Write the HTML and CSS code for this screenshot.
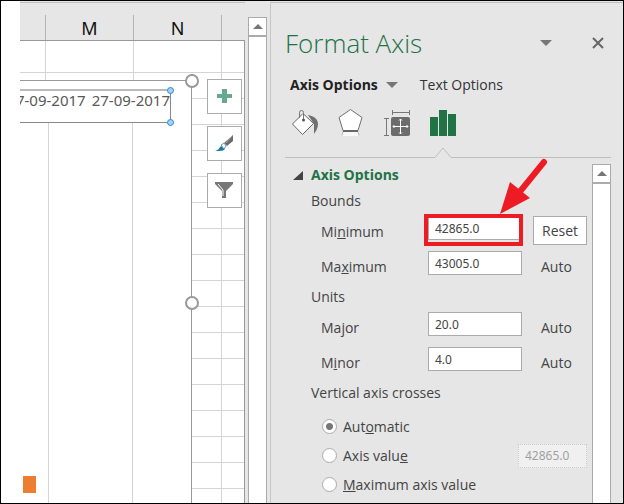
FILE: index.html
```html
<!DOCTYPE html>
<html lang="en">
  <head>
    <meta charset="UTF-8" />
    <meta name="viewport" content="width=device-width, initial-scale=1.0" />
    <title>Format Axis</title>
    <link rel="stylesheet" href="styles.css">
  </head>
  <body>
    <div class="app">
      <main class="sheet">
        <div class="grid">
          <div class="col-heads">
            <div class="col-head first"></div>
            <div class="col-head">M</div>
            <div class="col-head">N</div>
            <div class="col-head last"></div>
          </div>
          <div class="cells">
            <!-- chart floating over the cells -->
            <div class="chart">
              <div class="axis-labels">
                <span>17-09-2017</span>
                <span>27-09-2017</span>
                <i class="dot dot-top"></i>
                <i class="dot dot-bottom"></i>
              </div>
              <div class="plot">
                <div class="bar"></div>
              </div>
              <i class="handle handle-corner"></i>
              <i class="handle handle-side"></i>
            </div>
            <div class="chart-tools">
              <button class="tool" aria-label="Chart Elements">
                <svg width="33" height="33" viewBox="0 0 33 33">
                  <path d="M14 9h5v5h5v4h-5v5h-5v-5H9v-4h5z" fill="#68a88c" />
                </svg>
              </button>
              <button class="tool" aria-label="Chart Styles">
                <svg width="33" height="33" viewBox="0 0 33 33">
                  <path d="M25 8v6l-6 5-3-3z" fill="#6b6b6b" />
                  <path d="M24 9l-6 7" stroke="#aaa" fill="none" />
                  <path d="M7 24c3-1 4-2 5-4 2-2 5-1 5 1 0 3-4 3-10 3z" fill="#1f7a8c" />
                  <path d="M13 18l3-2 2 3-2 3z" fill="#fff" stroke="#5b9bd5" />
                </svg>
              </button>
              <button class="tool" aria-label="Chart Filters">
                <svg width="33" height="33" viewBox="0 0 33 33">
                  <path d="M7 8h18v2l-7 7v7h-4v-7l-7-7z" fill="#777" />
                  <path d="M10 10l5 6v6" stroke="#fff" fill="none" />
                </svg>
              </button>
            </div>
          </div>
        </div>
        <div class="scrollbar sheet-scroll">
          <button class="scroll-up" aria-label="Scroll up"></button>
          <div class="track"></div>
        </div>
      </main>

      <aside class="panel">
        <header class="panel-head">
          <h1>Format Axis</h1>
          <button class="icon-btn" aria-label="Pane options"><span class="caret"></span></button>
          <button class="icon-btn close" aria-label="Close">
            <svg width="14" height="14" viewBox="0 0 14 14">
              <path d="M2 2l10 10M12 2L2 12" stroke="#666" stroke-width="2" />
            </svg>
          </button>
        </header>

        <div class="tabs">
          <button class="tab selected">Axis Options <span class="caret"></span></button>
          <button class="tab">Text Options</button>
        </div>

        <nav class="categories">
          <button class="category" aria-label="Fill &amp; Line">
            <svg width="30" height="30" viewBox="0 0 30 30">
              <path d="M18 7c6 1 10 4 10 9 0 4-2 7-4 10V16z" fill="#707070" />
              <path d="M13 5.500l10.500 10L12.500 26.500l-10-10.500z" fill="#fff" stroke="#666" />
              <path d="M9.500 10V4.500q0-2 2-2t2 2V11" fill="none" stroke="#777" />
              <circle cx="13.500" cy="12" r="1.500" fill="#555" />
            </svg>
          </button>
          <button class="category" aria-label="Effects">
            <svg width="30" height="30" viewBox="0 0 30 30">
              <path d="M8 23h13l2 5H6z" fill="#f7f7f7" />
              <path d="M7 23.500l-1 4M22 23.500l1 4" stroke="#bbb" />
              <path d="M14.500 1.500L26 9.500l-4 13H7L3 9.500z" fill="#fff" stroke="#707070" />
              <path d="M7 23h15" stroke="#666" stroke-width="2" />
            </svg>
          </button>
          <button class="category" aria-label="Size &amp; Properties">
            <svg width="30" height="30" viewBox="0 0 30 30">
              <path d="M10.500 2v5M27.500 2v5M10.500 4.500h17M2 10.500h5M2 27.500h5M4.500 10.500v17" stroke="#777" fill="none" />
              <rect x="9" y="9" width="19" height="19" rx="2" fill="#6c6c6c" />
              <path d="M18.500 11v15M11 18.500h15M17 12.500l1.500-1.500 1.500 1.500M17 24.500l1.500 1.500 1.500-1.500M12.500 17L11 18.500l1.500 1.500M24.500 17l1.500 1.500-1.500 1.500" stroke="#fff" fill="none" />
            </svg>
          </button>
          <button class="category active" aria-label="Axis Options">
            <svg width="30" height="30" viewBox="0 0 30 30">
              <path d="M2 9h8v19H2zM11 2h8v26h-8zM20 6h8v22h-8z" fill="#217346" />
            </svg>
            <svg class="notch" width="18" height="11" viewBox="0 0 18 11">
              <path d="M0 11L9 1l9 10z" fill="#e6e6e6" />
              <path d="M0 10.500h1L9 1l8 9.500h1" fill="none" stroke="#bfbfbf" />
            </svg>
          </button>
        </nav>

        <div class="panel-body">
          <form class="options">
            <h2><span class="expander"></span>Axis Options</h2>

            <h3>Bounds</h3>
            <div class="row">
              <label for="min">Mi<u>n</u>imum</label>
              <div class="field marked">
                <input type="text" id="min" value="42865.0" />
                <svg class="arrow" width="60" height="64" viewBox="0 0 60 64">
                  <path d="M50 8L24 40" stroke="#ed1c24" stroke-width="6" stroke-linecap="round" />
                  <path d="M6 60L16 28l20 16z" fill="#ed1c24" />
                </svg>
              </div>
              <button type="button" class="reset">Reset</button>
            </div>
            <div class="row">
              <label for="max">Ma<u>x</u>imum</label>
              <div class="field"><input type="text" id="max" value="43005.0" /></div>
              <span class="auto">Auto</span>
            </div>

            <h3>Units</h3>
            <div class="row">
              <label for="major">Ma<u>j</u>or</label>
              <div class="field"><input type="text" id="major" value="20.0" /></div>
              <span class="auto">Auto</span>
            </div>
            <div class="row">
              <label for="minor">M<u>i</u>nor</label>
              <div class="field"><input type="text" id="minor" value="4.0" /></div>
              <span class="auto">Auto</span>
            </div>

            <h3>Vertical axis crosses</h3>
            <div class="choices">
              <div class="choice">
                <input type="radio" name="cross" id="cross-auto" checked />
                <label for="cross-auto">Aut<u>o</u>matic</label>
              </div>
              <div class="choice">
                <input type="radio" name="cross" id="cross-value" />
                <label for="cross-value">Axis valu<u>e</u></label>
                <input type="text" class="cross-at" value="42865.0" aria-label="Axis value" disabled />
              </div>
              <div class="choice">
                <input type="radio" name="cross" id="cross-max" />
                <label for="cross-max"><u>M</u>aximum axis value</label>
              </div>
            </div>
          </form>
          <div class="scrollbar">
            <button class="scroll-up" aria-label="Scroll up"></button>
            <div class="track"></div>
          </div>
        </div>
      </aside>
    </div>
  </body>
</html>
```
FILE: styles.css
```css
*,
*::before,
*::after {
  box-sizing: border-box;
}

body {
  margin: 0;
  font-family: "Open Sans", "Noto Sans", sans-serif;
  font-size: 14px;
  line-height: 20px;
  color: #444;
}

button {
  margin: 0;
  padding: 0;
  border: none;
  background: none;
  font: inherit;
  color: inherit;
}

svg {
  display: block;
}

.app {
  display: flex;
  height: 100vh;
  border: 1px solid #000;
  overflow: hidden;
  background-color: #e6e6e6;
}

/* worksheet */
.sheet {
  flex: 1;
  display: flex;
  min-width: 0;
  padding-top: 1px;
  border-left: 19px solid #fff;
  background-color: #e6e6e6;
}

.grid {
  flex: 1;
  display: flex;
  flex-direction: column;
  min-width: 0;
  border-top: 1px solid #bfbfbf;
}

.col-heads {
  display: flex;
  height: 38px;
  padding-top: 12px;
  border-bottom: 1px solid #999;
}

.col-head {
  width: 88px;
  border-right: 1px solid #b5b5b5;
  font-family: "Noto Sans", sans-serif;
  font-size: 18px;
  line-height: 26px;
  text-align: center;
  color: #111;
}

.col-head.first {
  width: 26px;
}

.col-head.last {
  flex: 1;
  border-right: none;
}

/* the first visible row is taller, so its upper part is kept blank */
.cells {
  flex: 1;
  position: relative;
  border-right: 1px solid #999;
  background-color: #fff;
  background-image:
    linear-gradient(to right, #d4d4d4 1px, transparent 1px),
    linear-gradient(#fff, #fff),
    linear-gradient(to bottom, #d4d4d4 1px, transparent 1px);
  background-size: 88px 26px, 100% 26px, 88px 26px;
  background-position: 25px 0, 0 0, 0 5px;
  background-repeat: repeat, no-repeat, repeat;
}

.chart {
  position: absolute;
  top: 39px;
  bottom: 0;
  left: 0;
  width: 172px;
  border-top: 1px solid #999;
  border-right: 1px solid #999;
  background-color: #fff;
}

.axis-labels {
  position: relative;
  display: flex;
  justify-content: flex-end;
  gap: 6px;
  width: 151px;
  height: 34px;
  margin-top: 8px;
  border: 1px solid #888;
  border-top: 2px solid #bbb;
  border-left: none;
  font-family: "Noto Sans", sans-serif;
  font-size: 15px;
  line-height: 18px;
  color: #595959;
  white-space: nowrap;
  clip-path: inset(-6px -6px -6px 0);
}

.plot {
  position: relative;
  height: 100%;
  background-image: linear-gradient(to right, #d4d4d4 1px, transparent 1px);
  background-size: 84px 100%;
  background-position: 28px 0;
}

.bar {
  position: absolute;
  left: 3px;
  top: 353px;
  width: 13px;
  height: 17px;
  background-color: #ed7d31;
}

.dot {
  position: absolute;
  right: -4px;
  width: 7px;
  height: 7px;
  border: 1px solid #2b88d8;
  border-radius: 50%;
  background-color: #a9d0f0;
}

.dot-top {
  top: -4px;
}

.dot-bottom {
  bottom: -4px;
}

.handle {
  position: absolute;
  right: -8px;
  width: 14px;
  height: 14px;
  border: 2px solid #999;
  border-radius: 50%;
  background-color: #fff;
}

.handle-corner {
  top: -7px;
}

.handle-side {
  top: 215px;
}

.chart-tools {
  position: absolute;
  top: 38px;
  left: 187px;
  display: flex;
  flex-direction: column;
  gap: 12px;
}

.tool {
  width: 35px;
  height: 35px;
  border: 1px solid #ababab;
  background-color: #fff;
}

/* scrollbars */
.scrollbar {
  display: flex;
  flex-direction: column;
  width: 19px;
}

.scroll-up {
  display: flex;
  justify-content: center;
  align-items: center;
  height: 19px;
  border: 1px solid #ababab;
  background-color: #fff;
}

.scroll-up::before {
  content: "";
  border: 5px solid transparent;
  border-top: none;
  border-bottom: 5px solid #777;
}

.track {
  flex: 1;
  border: 1px solid #ababab;
  border-bottom: none;
  background-color: #fff;
}

.sheet-scroll {
  margin: 15px 3px 0;
}

/* format pane */
.panel {
  display: flex;
  flex-direction: column;
  width: 353px;
  margin-top: 1px;
  padding: 0 12px 0 14px;
  border-top: 1px solid #bfbfbf;
  border-left: 1px solid #c6c6c6;
}

.panel-head {
  display: flex;
  align-items: center;
  height: 40px;
  margin-top: 20px;
  padding-right: 1px;
}

h1 {
  flex: 1;
  margin: 0;
  font-size: 26px;
  font-weight: 300;
  line-height: 40px;
  color: #217346;
}

.icon-btn {
  display: flex;
  justify-content: center;
  align-items: center;
  width: 24px;
  height: 24px;
}

.close {
  margin-left: 28px;
}

.caret {
  display: inline-block;
  border: 6px solid transparent;
  border-top-color: #777;
  border-bottom: none;
}

.tabs {
  display: flex;
  gap: 22px;
  margin-top: 10px;
  padding-left: 5px;
}

.tab {
  display: flex;
  align-items: center;
  gap: 8px;
  height: 24px;
  color: #333;
}

.tab.selected {
  font-weight: bold;
  color: #222;
}

.categories {
  display: flex;
  gap: 16px;
  height: 61px;
  padding: 11px 0 0 5px;
  border-bottom: 1px solid #bfbfbf;
}

.category {
  position: relative;
  width: 30px;
  height: 49px;
}

.category > svg:first-child {
  margin-bottom: 19px;
}

.notch {
  position: absolute;
  left: 6px;
  bottom: -1px;
}

.panel-body {
  flex: 1;
  display: flex;
  min-height: 0;
}

.panel-body .scrollbar {
  margin-top: 6px;
}

.options {
  flex: 1;
  padding: 4px 5px 0 0;
}

h2,
h3 {
  display: flex;
  align-items: center;
  height: 26px;
  margin: 0;
  padding-left: 26px;
  font-size: 14px;
  font-weight: normal;
}

h2 {
  padding-left: 8px;
  font-weight: bold;
  color: #217346;
}

.expander {
  margin-right: 8px;
  border-left: 10px solid transparent;
  border-bottom: 9px solid #444;
}

.row {
  display: grid;
  grid-template-columns: 107px 94px 1fr;
  height: 35px;
  padding-left: 36px;
}

.row label,
.auto {
  line-height: 35px;
}

.auto {
  padding-left: 19px;
}

input[type="text"] {
  display: block;
  width: 100%;
  height: 24px;
  padding: 0 6px;
  border: 1px solid #ababab;
  background-color: #fff;
  font-family: "Noto Sans", sans-serif;
  font-size: 12px;
  color: #444;
}

.field {
  position: relative;
  padding-top: 2px;
}

/* red frame and arrow drawn over the field */
.marked::after {
  content: "";
  position: absolute;
  top: 0;
  left: -4px;
  right: -1px;
  height: 32px;
  border: 4px solid #ed1c24;
}

.arrow {
  position: absolute;
  left: 66px;
  top: -60px;
}

.reset {
  height: 29px;
  margin: 2px 0 0 11px;
  border: 1px solid #ababab;
  background-color: #fff;
}

.choices {
  padding: 6px 0 0 37px;
}

.choice {
  display: flex;
  align-items: center;
  gap: 6px;
  height: 29px;
}

input[type="radio"] {
  appearance: none;
  width: 15px;
  height: 15px;
  margin: 0;
  border: 1px solid #ababab;
  border-radius: 50%;
  background-color: #fff;
}

input[type="radio"]:checked {
  background-image: radial-gradient(circle, #777 3px, transparent 4px);
}

input.cross-at {
  width: 69px;
  margin-left: auto;
  border: 1px dotted #ccc;
  background-color: #f0f0f0;
  color: #a0a0a0;
}
```
